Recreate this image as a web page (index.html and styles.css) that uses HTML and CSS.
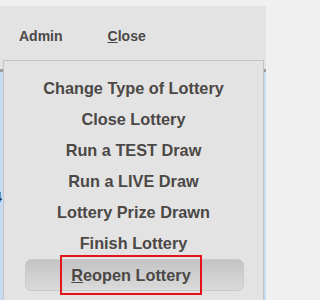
FILE: index.html
```html
<!DOCTYPE html>
<html>
<head>
<meta charset="utf-8">
<link rel="stylesheet" href="styles.css">
</head>
<body>
<div class="window">
  <div class="topstrip"></div>
  <div class="menubar">
    <span class="menu-item admin">Admin</span>
    <span class="menu-item"><u>C</u>lose</span>
  </div>
  <div class="toolbar-edge"></div>
  <div class="content">
    <div class="bg-text">4</div>
  </div>
  <div class="dropdown">
    <div class="item">Change Type of Lottery</div>
    <div class="item">Close Lottery</div>
    <div class="item">Run a TEST Draw</div>
    <div class="item">Run a LIVE Draw</div>
    <div class="item">Lottery Prize Drawn</div>
    <div class="item">Finish Lottery</div>
    <div class="item active"><span class="label"><u>R</u>eopen Lottery</span></div>
  </div>
</div>
</body>
</html>
```
FILE: styles.css
```css
html, body {
  margin: 0;
  padding: 0;
  background: #f0f0f0;
  overflow: hidden;
}
body {
  width: 266px;
  height: 300px;
  font-family: "Liberation Sans", Arial, sans-serif;
}
.window {
  position: relative;
  height: 300px;
  display: flex;
  flex-direction: column;
}
.topstrip {
  height: 6px;
  background: #f0f0f0;
}
.menubar {
  height: 63px;
  background: #e3e3e3;
  display: flex;
  align-items: flex-start;
  padding-left: 19px;
  gap: 45px;
  box-sizing: border-box;
  padding-top: 22px;
}
.menu-item {
  font-weight: bold;
  font-size: 14px;
  color: #4b4846;
}
.toolbar-edge {
  height: 3px;
  background: #9c9c9c;
}
.content {
  flex: 1;
  background: #c6dbf1;
  padding-top: 117px;
}
.bg-text {
  margin-left: -6px;
  font-weight: bold;
  font-size: 14px;
  color: #2b2b2b;
}
.dropdown {
  position: absolute;
  top: 60px;
  left: 3px;
  width: 261px;
  height: 250px;
  box-sizing: border-box;
  background: #e3e3e3;
  border: 1px solid #c4c4c4;
  padding-top: 12px;
  display: flex;
  flex-direction: column;
}
.item {
  height: 31px;
  line-height: 31px;
  text-align: center;
  font-weight: bold;
  font-size: 16.3px;
  color: #4b4846;
}
.item.active {
  margin: 0 19px 0 21px;
  padding-right: 7px;
  height: 30px;
  line-height: 30px;
  border: 1px solid #cacaca;
  border-radius: 6px;
  background: linear-gradient(#c4c4c4, #dadada);
}
.label {
  position: relative;
}
.label::after {
  content: "";
  position: absolute;
  left: -11px;
  right: -11px;
  top: -11px;
  bottom: -11px;
  border: 2px solid #e4141c;
}
```
